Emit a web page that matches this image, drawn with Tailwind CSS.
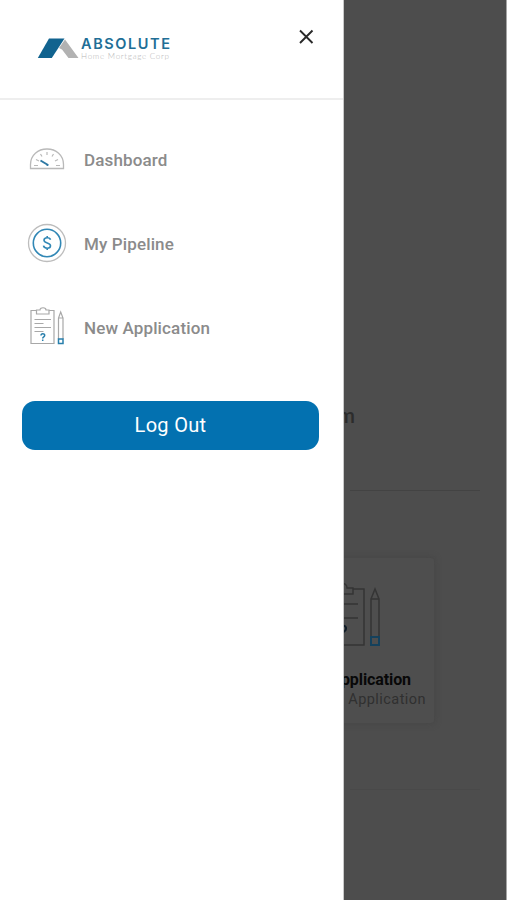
<!DOCTYPE html>
<html lang="en">
<head>
<meta charset="utf-8">
<title>Absolute Home Mortgage Corp</title>
<script src="https://cdn.jsdelivr.net/npm/@tailwindcss/browser@4"></script>
</head>
<body class="relative h-[900px] w-[507px] overflow-hidden bg-[#4d4d4d] font-['Roboto',sans-serif]">
<!-- Dimmed page -->
<main class="flex h-[900px] flex-col border-r border-[#a5a5a5] pt-[402px]">
  <h1 class="w-[355px] text-right text-[20px] leading-[28px] font-medium text-[#2c2c2c]">m</h1>
  <hr class="mt-[60px] mr-[26px] ml-[350px] border-[#434343]">
  <section class="mt-[67px] ml-[266px] flex h-[165px] w-[168px] flex-col rounded-[3px] bg-[#4e4e4e] shadow-[0_0_5px_2px_#484848]">
    <svg class="mt-[24px] ml-[51px] h-[66px] w-[64px] shrink-0" viewBox="0 0 64 66" fill="none" stroke="#353535" stroke-width="1.500">
      <path d="M14 7H2v56h45V7H36M14 10V6h7c0-6 9-6 9 0h6v6H14zM9 22h32M9 36h32"/>
      <path d="M54 55V17l4-10 4 10v38M54 17h8"/>
      <path d="M54 55h8v8h-8z" stroke="#15415c" stroke-width="2"/>
      <path d="M23 48c0-6 7-5 6-1 0 3-4 2-4 6" stroke="#101d28" stroke-width="2"/>
    </svg>
    <h2 class="mt-[20px] w-[145px] text-right text-[16px] leading-[24px] font-bold tracking-[-0.1px] text-[#080808]">pplication</h2>
    <p class="mt-[-2px] w-[160px] text-right text-[14.5px] leading-[20px] tracking-[0.45px] text-[#303030]">Application</p>
  </section>
  <hr class="mt-[66px] mr-[26px] ml-[350px] border-[#494949]">
</main>

<!-- Drawer -->
<aside class="absolute top-0 left-0 flex h-[900px] w-[344px] flex-col border-r border-[#c9c9c9] bg-white">
  <header class="flex h-[100px] shrink-0 justify-between border-b-2 border-[#eeeeee] pt-[28px] pr-[28px] pl-[37px]">
    <svg class="h-[40px] w-[136px]" viewBox="0 0 136 40" aria-label="Absolute Home Mortgage Corp">
      <path d="M.8 30 12 10.500H27.500L14.800 30z" fill="#11638f"/>
      <path d="M22 20 28 11.500 41.500 30H31.500L25 21.500z" fill="#b2b2b2"/>
      <text x="44" y="21.300" font-family="Inter, sans-serif" font-size="14.500" font-weight="600" textLength="89" fill="#216e96">ABSOLUTE</text>
      <text x="44" y="30.700" font-family="Lato, sans-serif" font-size="8" font-weight="300" textLength="88" fill="#b5b5b5">Home Mortgage Corp</text>
    </svg>
    <button class="h-[18px] w-[18px]" aria-label="Close">
      <svg viewBox="0 0 18 18" fill="none" stroke="#292929" stroke-width="1.900"><path d="M3 2.500 15.500 15M15.500 2.500 3 15"/></svg>
    </button>
  </header>
  <nav class="mt-[18px] flex flex-col text-[17px] leading-[24px] font-medium tracking-[0.13px] text-[#8b8b8b]">
    <a class="flex h-[84px] items-center gap-[18px] pl-[28px]">
      <svg class="h-[38px] w-[38px]" viewBox="0 0 38 38" fill="none" stroke="#b9b9b9">
        <path d="M2.500 27.500v-4C2.500 14 10 8 19 8s16.500 6 16.500 15.500v4z" stroke-width="1.300"/>
        <path d="M6 24.500h4M28 24.500h4M8 18.500l3 1.500M12.500 13l1.500 2.500M19 11v3M25.500 13 24 15.500M30 18.500 27 20" stroke-width="1.200"/>
        <path d="m12.500 19.500 7.500 4.500" stroke="#2d78a3" stroke-width="2"/><circle cx="19.500" cy="24" r="1.100" fill="#2d78a3" stroke="none"/>
      </svg>
      <span>Dashboard</span>
    </a>
    <a class="flex h-[84px] items-center gap-[18px] pl-[28px]">
      <svg class="h-[38px] w-[38px] overflow-visible" viewBox="0 0 38 38" fill="none">
        <circle cx="19" cy="18" r="18.500" stroke="#bdbdbd" stroke-width="1.300"/>
        <circle cx="19" cy="18" r="13.700" stroke="#3187b5" stroke-width="1.600"/>
        <path d="M22.500 14.800c-.7-2.800-6.500-2.600-6.500.4 0 3.500 6.500 2 6.500 5.500 0 3.300-6.500 3.300-7 0M19.200 11v2.500M19.200 22.500V25" stroke="#3187b5" stroke-width="1.600"/>
      </svg>
      <span>My Pipeline</span>
    </a>
    <a class="flex h-[84px] items-center gap-[18px] pl-[28px]">
      <svg class="h-[38px] w-[38px] overflow-visible" viewBox="0 0 38 38" fill="none" stroke="#a8a8a8" stroke-width="1.200">
        <path d="M8.500 1.500H3v33h23v-33h-5M8.500 1h3.500c0-3 6-3 6 0h3v4H8.500zM6.500 10.500H23M6.500 14.500h9M6.500 18.500H23M6.500 22.500h9"/>
        <path d="M30.500 30V9l2.200-6L35 9v21M30.500 9H35"/>
        <path d="M30.500 30H35v4.500h-4.500z" stroke="#287fac" stroke-width="1.500"/>
        <path d="M13 26.500c0-2.300 3.700-2.300 3.700-.2 0 1.700-2 1.300-2 3.200M14.700 30.500V32" stroke="#287fac" stroke-width="1.500"/>
      </svg>
      <span>New Application</span>
    </a>
  </nav>
  <button class="mt-[31px] ml-[22px] flex h-[49px] w-[297px] shrink-0 items-center justify-center rounded-[13px] bg-[#0371b0] pb-[2px] text-[20px] leading-[28px] tracking-[0.3px] text-white">Log Out</button>
</aside>
</body>
</html>
